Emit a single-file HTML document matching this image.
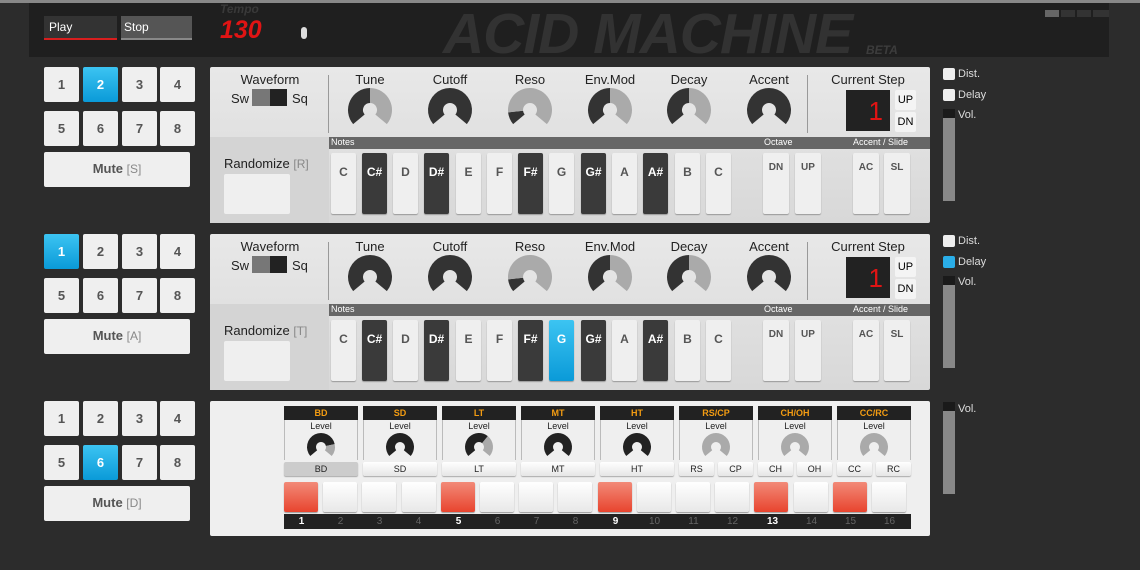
<!DOCTYPE html>
<html><head><meta charset="utf-8"><style>
*{box-sizing:border-box;margin:0;padding:0}
body{width:1140px;height:570px;background:#2c2c2c;font-family:"Liberation Sans",sans-serif;position:relative;overflow:hidden}
.a{position:absolute}
.pad{position:absolute;width:35px;height:35px;background:#efefef;border-radius:2px;color:#555;font-weight:bold;font-size:13px;text-align:center;line-height:35px}
.pad.on{background:linear-gradient(#3cc4f2,#0a9ad8);color:#fff}
.mute{position:absolute;width:146px;height:35px;background:#efefef;border-radius:2px;color:#555;font-weight:bold;font-size:13px;text-align:center;line-height:33px}
.mute span{font-weight:normal;color:#888;font-size:12px}
.panel{position:absolute;left:210px;width:720px;height:156px;background:linear-gradient(#e8e8e8,#d8d8d8);border-radius:2px}
.lbl{position:absolute;font-size:13px;color:#222;text-align:center;width:80px}
.key{position:absolute;top:16px;width:25px;height:61px;background:#efefef;border-radius:2px;font-weight:bold;font-size:12px;color:#555;text-align:center;padding-top:12px;box-shadow:0 1px 1px #999}
.key.b{background:#3a3a3a;color:#fff}
.key.s{background:linear-gradient(#3cc4f2,#0a9ad8);color:#fff}
.sm{position:absolute;width:26px;height:61px;top:16px;background:#efefef;border-radius:2px;font-weight:bold;font-size:10px;color:#555;text-align:center;padding-top:9px;box-shadow:0 1px 1px #999}
.chk{position:absolute;left:943px;width:12px;height:12px;background:#eee;border-radius:2px}
.ctl{position:absolute;left:958px;font-size:11px;color:#ddd}
.vol{position:absolute;left:943px;width:12px;height:92px;background:#888;border-top:9px solid #1a1a1a}
.hd{position:absolute;top:5px;width:74px;height:14px;background:#222;color:#f39c12;font-size:9px;text-align:center;line-height:14px;font-weight:bold}
.lv{position:absolute;top:19px;width:74px;height:40px;border-left:1px solid #bbb;border-right:1px solid #bbb;font-size:9px;color:#222;text-align:center;padding-top:1px}
.db{position:absolute;top:61px;height:14px;background:linear-gradient(#fff,#e6e6e6);border-radius:2px;font-size:9px;color:#222;text-align:center;line-height:14px;box-shadow:0 1px 1px #aaa}
.st{position:absolute;top:113px;height:15px;width:35px;color:#666;font-size:10px;text-align:center;line-height:15px}
</style></head><body>
<div class="a" style="left:0;top:0;width:1140px;height:3px;background:#888"></div>
<div class="a" style="left:29px;top:3px;width:1080px;height:54px;background:#1f1f1f"></div>
<div class="a" style="left:44px;top:16px;width:73px;height:24px;background:#333;color:#fff;font-size:12px;padding:4px 5px;border-bottom:2px solid #d81e1e">Play</div>
<div class="a" style="left:121px;top:16px;width:71px;height:24px;background:#555;color:#fff;font-size:12px;padding:4px 3px;border-bottom:2px solid #888">Stop</div>
<div class="a" style="left:220px;top:2px;font-size:12px;font-style:italic;font-weight:bold;color:#393939">Tempo</div>
<div class="a" style="left:220px;top:16px;font-size:25px;font-style:italic;font-weight:bold;color:#e01414">130</div>
<div class="a" style="left:301px;top:27px;width:6px;height:12px;border-radius:3px;background:#ddd"></div>
<div class="a" style="left:443px;top:1px;font-size:57px;font-style:italic;font-weight:bold;color:#323232;letter-spacing:-1px;white-space:nowrap">ACID MACHINE</div>
<div class="a" style="left:866px;top:43px;font-size:12px;font-style:italic;font-weight:bold;color:#3c3c3c">BETA</div>
<div class="a" style="left:1045px;top:10px;width:14px;height:7px;background:#666"></div>
<div class="a" style="left:1061px;top:10px;width:14px;height:7px;background:#333"></div>
<div class="a" style="left:1077px;top:10px;width:14px;height:7px;background:#333"></div>
<div class="a" style="left:1093px;top:10px;width:16px;height:7px;background:#333"></div>

<div class="pad" style="left:44px;top:67px">1</div><div class="pad on" style="left:83px;top:67px">2</div><div class="pad" style="left:122px;top:67px">3</div><div class="pad" style="left:160px;top:67px">4</div>
<div class="pad" style="left:44px;top:111px">5</div><div class="pad" style="left:83px;top:111px">6</div><div class="pad" style="left:122px;top:111px">7</div><div class="pad" style="left:160px;top:111px">8</div>
<div class="mute" style="left:44px;top:152px">Mute <span>[S]</span></div>
<div class="pad on" style="left:44px;top:234px">1</div><div class="pad" style="left:83px;top:234px">2</div><div class="pad" style="left:122px;top:234px">3</div><div class="pad" style="left:160px;top:234px">4</div>
<div class="pad" style="left:44px;top:278px">5</div><div class="pad" style="left:83px;top:278px">6</div><div class="pad" style="left:122px;top:278px">7</div><div class="pad" style="left:160px;top:278px">8</div>
<div class="mute" style="left:44px;top:319px">Mute <span>[A]</span></div>
<div class="pad" style="left:44px;top:401px">1</div><div class="pad" style="left:83px;top:401px">2</div><div class="pad" style="left:122px;top:401px">3</div><div class="pad" style="left:160px;top:401px">4</div>
<div class="pad" style="left:44px;top:445px">5</div><div class="pad on" style="left:83px;top:445px">6</div><div class="pad" style="left:122px;top:445px">7</div><div class="pad" style="left:160px;top:445px">8</div>
<div class="mute" style="left:44px;top:486px">Mute <span>[D]</span></div>

<div class="panel" style="top:67px" id="p1">
 <div class="a" style="left:0;top:70px;width:119px;height:86px;background:#d4d4d4"></div>
 <div class="a" style="left:118px;top:8px;width:1px;height:58px;background:#999"></div>
 <div class="a" style="left:597px;top:8px;width:1px;height:58px;background:#999"></div>
 <div class="a" style="left:119px;top:70px;width:601px;height:12px;background:#666"></div>
 <div class="a" style="left:121px;top:70px;font-size:9px;color:#fff">Notes</div>
 <div class="a" style="left:554px;top:70px;font-size:9px;color:#fff">Octave</div>
 <div class="a" style="left:643px;top:70px;font-size:9px;color:#fff">Accent / Slide</div>
 <div class="lbl" style="left:20px;top:5px">Waveform</div>
 <div class="a" style="left:21px;top:24px;font-size:13px;color:#222">Sw</div>
 <div class="a" style="left:42px;top:22px;width:18px;height:17px;background:#777"></div><div class="a" style="left:60px;top:22px;width:17px;height:17px;background:#222"></div>
 <div class="a" style="left:82px;top:24px;font-size:13px;color:#222">Sq</div>
 <div class="lbl" style="left:120px;top:5px">Tune</div><div class="lbl" style="left:200px;top:5px">Cutoff</div><div class="lbl" style="left:280px;top:5px">Reso</div><div class="lbl" style="left:360px;top:5px">Env.Mod</div><div class="lbl" style="left:439px;top:5px">Decay</div><div class="lbl" style="left:519px;top:5px">Accent</div>
 <div class="a" style="left:603px;top:5px;width:110px;text-align:center;font-size:13px;color:#222">Current Step</div>
 <div class="a" style="left:636px;top:23px;width:44px;height:41px;background:#222;color:#e01414;font-size:26px;text-align:right;padding:6px 7px 0 0">1</div>
 <div class="a" style="left:685px;top:23px;width:21px;height:20px;background:#f4f4f4;font-size:11px;text-align:center;line-height:20px;border-radius:2px">UP</div>
 <div class="a" style="left:685px;top:45px;width:21px;height:20px;background:#f4f4f4;font-size:11px;text-align:center;line-height:20px;border-radius:2px">DN</div>
 <div class="a" style="left:14px;top:89px;font-size:13px;color:#222">Randomize <span style="color:#888;font-size:12px">[R]</span></div>
 <div class="a" style="left:14px;top:107px;width:66px;height:40px;background:#efefef;border-radius:2px"></div>
 <div class="a" style="left:0;top:70px;width:720px;height:86px">
 <div class="key" style="left:121px">C</div><div class="key b" style="left:152px">C#</div><div class="key" style="left:183px">D</div><div class="key b" style="left:214px">D#</div><div class="key" style="left:246px">E</div><div class="key" style="left:277px">F</div><div class="key b" style="left:308px">F#</div><div class="key" style="left:339px">G</div><div class="key b" style="left:371px">G#</div><div class="key" style="left:402px">A</div><div class="key b" style="left:433px">A#</div><div class="key" style="left:465px">B</div><div class="key" style="left:496px">C</div>
 <div class="sm" style="left:553px">DN</div><div class="sm" style="left:585px">UP</div><div class="sm" style="left:643px">AC</div><div class="sm" style="left:674px">SL</div>
 </div>
 <svg class="a" style="left:0;top:0" width="720" height="70" id="k1"></svg>
</div>
<div class="panel" style="top:234px" id="p2">
 <div class="a" style="left:0;top:70px;width:119px;height:86px;background:#d4d4d4"></div>
 <div class="a" style="left:118px;top:8px;width:1px;height:58px;background:#999"></div>
 <div class="a" style="left:597px;top:8px;width:1px;height:58px;background:#999"></div>
 <div class="a" style="left:119px;top:70px;width:601px;height:12px;background:#666"></div>
 <div class="a" style="left:121px;top:70px;font-size:9px;color:#fff">Notes</div>
 <div class="a" style="left:554px;top:70px;font-size:9px;color:#fff">Octave</div>
 <div class="a" style="left:643px;top:70px;font-size:9px;color:#fff">Accent / Slide</div>
 <div class="lbl" style="left:20px;top:5px">Waveform</div>
 <div class="a" style="left:21px;top:24px;font-size:13px;color:#222">Sw</div>
 <div class="a" style="left:42px;top:22px;width:18px;height:17px;background:#777"></div><div class="a" style="left:60px;top:22px;width:17px;height:17px;background:#222"></div>
 <div class="a" style="left:82px;top:24px;font-size:13px;color:#222">Sq</div>
 <div class="lbl" style="left:120px;top:5px">Tune</div><div class="lbl" style="left:200px;top:5px">Cutoff</div><div class="lbl" style="left:280px;top:5px">Reso</div><div class="lbl" style="left:360px;top:5px">Env.Mod</div><div class="lbl" style="left:439px;top:5px">Decay</div><div class="lbl" style="left:519px;top:5px">Accent</div>
 <div class="a" style="left:603px;top:5px;width:110px;text-align:center;font-size:13px;color:#222">Current Step</div>
 <div class="a" style="left:636px;top:23px;width:44px;height:41px;background:#222;color:#e01414;font-size:26px;text-align:right;padding:6px 7px 0 0">1</div>
 <div class="a" style="left:685px;top:23px;width:21px;height:20px;background:#f4f4f4;font-size:11px;text-align:center;line-height:20px;border-radius:2px">UP</div>
 <div class="a" style="left:685px;top:45px;width:21px;height:20px;background:#f4f4f4;font-size:11px;text-align:center;line-height:20px;border-radius:2px">DN</div>
 <div class="a" style="left:14px;top:89px;font-size:13px;color:#222">Randomize <span style="color:#888;font-size:12px">[T]</span></div>
 <div class="a" style="left:14px;top:107px;width:66px;height:40px;background:#efefef;border-radius:2px"></div>
 <div class="a" style="left:0;top:70px;width:720px;height:86px">
 <div class="key" style="left:121px">C</div><div class="key b" style="left:152px">C#</div><div class="key" style="left:183px">D</div><div class="key b" style="left:214px">D#</div><div class="key" style="left:246px">E</div><div class="key" style="left:277px">F</div><div class="key b" style="left:308px">F#</div><div class="key s" style="left:339px">G</div><div class="key b" style="left:371px">G#</div><div class="key" style="left:402px">A</div><div class="key b" style="left:433px">A#</div><div class="key" style="left:465px">B</div><div class="key" style="left:496px">C</div>
 <div class="sm" style="left:553px">DN</div><div class="sm" style="left:585px">UP</div><div class="sm" style="left:643px">AC</div><div class="sm" style="left:674px">SL</div>
 </div>
 <svg class="a" style="left:0;top:0" width="720" height="70" id="k2"></svg>
</div>

<div class="chk" style="top:68px"></div><div class="ctl" style="top:68px">Dist.</div>
<div class="chk" style="top:89px"></div><div class="ctl" style="top:89px">Delay</div>
<div class="vol" style="top:109px"></div><div class="ctl" style="top:109px">Vol.</div>
<div class="chk" style="top:235px"></div><div class="ctl" style="top:235px">Dist.</div>
<div class="chk" style="top:256px;background:#2aaee8"></div><div class="ctl" style="top:256px">Delay</div>
<div class="vol" style="top:276px"></div><div class="ctl" style="top:276px">Vol.</div>
<div class="vol" style="top:402px"></div><div class="ctl" style="top:403px">Vol.</div>

<div class="a" style="left:210px;top:401px;width:720px;height:135px;background:#efefef;border-radius:2px">
 <div class="hd" style="left:74px">BD</div><div class="hd" style="left:153px">SD</div><div class="hd" style="left:232px">LT</div><div class="hd" style="left:311px">MT</div><div class="hd" style="left:390px">HT</div><div class="hd" style="left:469px">RS/CP</div><div class="hd" style="left:548px">CH/OH</div><div class="hd" style="left:627px">CC/RC</div>
 <div class="lv" style="left:74px">Level</div><div class="lv" style="left:153px">Level</div><div class="lv" style="left:232px">Level</div><div class="lv" style="left:311px">Level</div><div class="lv" style="left:390px">Level</div><div class="lv" style="left:469px">Level</div><div class="lv" style="left:548px">Level</div><div class="lv" style="left:627px">Level</div>
 <div class="db" style="left:74px;width:74px;background:#ccc">BD</div><div class="db" style="left:153px;width:74px">SD</div><div class="db" style="left:232px;width:74px">LT</div><div class="db" style="left:311px;width:74px">MT</div><div class="db" style="left:390px;width:74px">HT</div>
 <div class="db" style="left:469px;width:35px">RS</div><div class="db" style="left:508px;width:35px">CP</div><div class="db" style="left:548px;width:35px">CH</div><div class="db" style="left:587px;width:35px">OH</div><div class="db" style="left:627px;width:35px">CC</div><div class="db" style="left:666px;width:35px">RC</div>
 <div class="a" style="left:74px;top:113px;width:627px;height:15px;background:#222"></div>
 <div class="st" style="left:74px;color:#fff;font-weight:bold">1</div><div class="st" style="left:113px">2</div><div class="st" style="left:152px">3</div><div class="st" style="left:191px">4</div><div class="st" style="left:231px;color:#fff;font-weight:bold">5</div><div class="st" style="left:270px">6</div><div class="st" style="left:309px">7</div><div class="st" style="left:348px">8</div><div class="st" style="left:388px;color:#fff;font-weight:bold">9</div><div class="st" style="left:427px">10</div><div class="st" style="left:466px">11</div><div class="st" style="left:505px">12</div><div class="st" style="left:545px;color:#fff;font-weight:bold">13</div><div class="st" style="left:584px">14</div><div class="st" style="left:623px">15</div><div class="st" style="left:662px">16</div>
 <div id="dp"></div>
 <svg class="a" style="left:0;top:0" width="720" height="60" id="k3"></svg>
</div>
<script>
function P(cx,cy,r,a){a=a*Math.PI/180;return [cx+r*Math.sin(a),cy-r*Math.cos(a)];}
function seg(cx,cy,R,r,a0,a1,c){if(a1-a0<0.5)return '';var p=P(cx,cy,R,a0),q=P(cx,cy,R,a1),s=P(cx,cy,r,a1),t=P(cx,cy,r,a0),l=(a1-a0)>180?1:0;
return '<path fill="'+c+'" d="M'+p+' A'+R+' '+R+' 0 '+l+' 1 '+q+' L'+s+' A'+r+' '+r+' 0 '+l+' 0 '+t+'Z"/>';}
function knob(cx,cy,R,r,v,d,l){var m=-130+260*v;return seg(cx,cy,R,r,-130,m,d)+seg(cx,cy,R,r,m,130,l);}
var xs=[160,240,320,400,479,559];
var v1=[0.5,1,0.13,0.5,0.5,1],v2=[1,1,0.13,0.5,0.5,1];
var h1='',h2='';for(var i=0;i<6;i++){h1+=knob(xs[i],43,22,7,v1[i],'#333','#aaa');h2+=knob(xs[i],43,22,7,v2[i],'#333','#aaa');}
document.getElementById('k1').innerHTML=h1;document.getElementById('k2').innerHTML=h2;
var dv=[0.8,1,0.65,1,1,0,0,0],h3='';
for(i=0;i<8;i++)h3+=knob(111+79*i,46,14,5,dv[i],'#222','#aaa');
document.getElementById('k3').innerHTML=h3;
var on=[0,4,8,12,14],dp='';
for(i=0;i<16;i++){var x=74+39.2*i;var o=on.indexOf(i)>=0;
dp+='<div class="a" style="left:'+x+'px;top:81px;width:34px;height:30px;border-radius:2px;box-shadow:0 1px 1px #999;background:'+(o?'linear-gradient(#f28a78,#e8442e)':'linear-gradient(#fff,#e8e8e8)')+'"></div>';}
document.getElementById('dp').innerHTML=dp;
</script>
</body></html>
